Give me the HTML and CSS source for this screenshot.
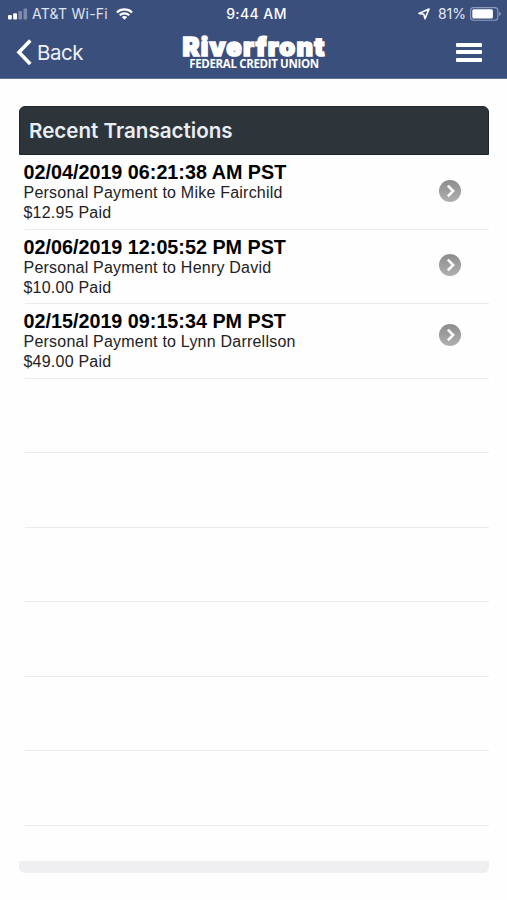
FILE: index.html
```html
<!doctype html>
<html lang="en">
<head>
  <title>Recent Transactions</title>
  <meta charset="utf-8">
  <meta name="viewport" content="width=device-width, initial-scale=1">
  <link rel="stylesheet" href="styles.css">
</head>
<body>

  <!-- top bar -->
  <header class="top">
    <div class="status">
      <div class="status-left">
        <svg class="signal" width="20" height="12" viewBox="0 0 20 12" fill="#fff">
          <rect x="0" y="7" width="3.8" height="4.5" rx="1"/>
          <rect x="5.2" y="5.3" width="3.8" height="6.2" rx="1"/>
          <rect x="10.4" y="3" width="3.6" height="8.5" rx="1" opacity=".35"/>
          <rect x="15.5" y="0.5" width="3.6" height="11" rx="1" opacity=".35"/>
        </svg>
        <span class="carrier">AT&amp;T Wi-Fi</span>
        <svg class="wifi" width="17" height="12" viewBox="0 0 17 12" fill="none" stroke="#fff" stroke-width="2.1">
          <path d="M.9 4.4C5.2.4 11.8.4 16.1 4.4"/>
          <path d="M3.7 7.2C6.4 4.7 10.6 4.7 13.3 7.2"/>
          <path d="M8.5 11.7L5.8 9C7.3 7.6 9.7 7.6 11.2 9Z" fill="#fff" stroke="none"/>
        </svg>
      </div>
      <div class="time">9:44 AM</div>
      <div class="status-right">
        <svg class="location" width="12" height="12" viewBox="0 0 12 12" fill="none" stroke="#fff" stroke-width="1.6" stroke-linejoin="round">
          <path d="M11 1L1 5.4L5.8 6.2L7 10.8Z"/>
        </svg>
        <span class="percent">81%</span>
        <svg class="battery" width="32" height="14" viewBox="0 0 32 14">
          <rect x=".6" y=".6" width="27.2" height="12.6" rx="3" fill="none" stroke="#8f9cbd" stroke-width="1.1"/>
          <rect x="2.3" y="2.2" width="20.6" height="9.4" rx="1.5" fill="#fff"/>
          <path d="M29.2 4.8C31.4 5.6 31.4 8.2 29.2 9Z" fill="#8f9cbd"/>
        </svg>
      </div>
    </div>

    <nav class="nav">
      <a class="back">
        <svg width="17" height="28" viewBox="0 0 17 28" fill="none" stroke="#fff" stroke-width="3.6">
          <path d="M15.3 2.6L4 14.3L15.3 26"/>
        </svg>
        <span>Back</span>
      </a>
      <div class="logo">
        <div class="logo-name">Riverfront</div>
        <div class="logo-sub">FEDERAL CREDIT UNION</div>
      </div>
      <a class="menu">
        <span class="bar"></span>
        <span class="bar"></span>
        <span class="bar"></span>
      </a>
    </nav>
  </header>

  <svg width="0" height="0" class="defs">
    <defs>
      <linearGradient id="grey" x1="0" y1="0" x2="0" y2="1">
        <stop offset="0" stop-color="#8c8c8c"/>
        <stop offset="1" stop-color="#b0b0b0"/>
      </linearGradient>
      <symbol id="arrow" viewBox="0 0 24 24">
        <circle cx="12" cy="12" r="11" fill="url(#grey)"/>
        <path d="M9.8 6.6L15.2 12L9.8 17.4" fill="none" stroke="#fff" stroke-width="2.5"/>
      </symbol>
    </defs>
  </svg>

  <!-- transactions -->
  <main class="panel">
    <h1 class="title">Recent Transactions</h1>
    <ul class="list">
      <li class="row">
        <div class="info">
          <div class="date">02/04/2019 06:21:38 AM PST</div>
          <div class="text">Personal Payment to Mike Fairchild</div>
          <div class="text amount">$12.95 Paid</div>
        </div>
        <svg class="arrow"><use href="#arrow"/></svg>
      </li>
      <li class="row">
        <div class="info">
          <div class="date">02/06/2019 12:05:52 PM PST</div>
          <div class="text">Personal Payment to Henry David</div>
          <div class="text amount">$10.00 Paid</div>
        </div>
        <svg class="arrow arrow-mid"><use href="#arrow"/></svg>
      </li>
      <li class="row">
        <div class="info">
          <div class="date">02/15/2019 09:15:34 PM PST</div>
          <div class="text">Personal Payment to Lynn Darrellson</div>
          <div class="text amount">$49.00 Paid</div>
        </div>
        <svg class="arrow arrow-last"><use href="#arrow"/></svg>
      </li>
      <li class="row"></li>
      <li class="row"></li>
      <li class="row"></li>
      <li class="row"></li>
      <li class="row"></li>
      <li class="row"></li>
    </ul>
    <div class="panel-foot"></div>
  </main>

</body>
</html>
```
FILE: styles.css
```css
* {
  box-sizing: border-box;
}
body {
  margin: 0;
  background-color: #fefefe;
  font-family: 'Liberation Sans', Arial, sans-serif;
}

/* top bar */
.top {
  height: 79px;
  background-color: #3b4f7c;
  border-bottom: 1px solid #5f7299;
  color: #fff;
  font-family: Inter, sans-serif;
}
.status {
  display: grid;
  grid-template-columns: 1fr auto 1fr;
  align-items: center;
  height: 27px;
  padding: 0 5px 0 8px;
  font-size: 14px;
  line-height: 28px;
}
.status-left, .status-right {
  display: flex;
  align-items: center;
}
.status-right {
  justify-content: flex-end;
}
.carrier {
  margin-left: 4px;
  color: #dfe5f1;
  letter-spacing: .25px;
}
.wifi {
  margin-left: 8px;
}
.time {
  margin-right: -3px;
  font-weight: 500;
  letter-spacing: .4px;
}
.percent {
  margin: 0 4px 0 8px;
  color: #e6eaf4;
}

.nav {
  display: grid;
  grid-template-columns: 1fr auto 1fr;
  align-items: center;
  height: 50px;
  padding: 0 25px 0 15px;
}
.back {
  display: flex;
  align-items: center;
  color: #eef1f8;
  font-size: 20.5px;
  letter-spacing: -.5px;
}
.back span {
  margin-left: 5px;
}
.logo {
  margin-right: -11px;
  text-align: center;
}
.logo-name {
  font-size: 25.5px;
  line-height: 22px;
  font-weight: 900;
  letter-spacing: 1.2px;
  -webkit-text-stroke: 1.6px #fff;
}
.logo-sub {
  font-family: 'Open Sans', sans-serif;
  font-size: 11.5px;
  line-height: 11px;
  font-weight: 700;
  letter-spacing: -.35px;
}
.menu {
  display: flex;
  flex-direction: column;
  gap: 3.5px;
  justify-self: end;
}
.bar {
  width: 26px;
  height: 4px;
  border-radius: 1px;
  background-color: #fff;
}

.defs {
  display: block;
}

/* transactions */
.panel {
  width: 470px;
  margin: 27px 0 0 19px;
}
.title {
  height: 49px;
  margin: 0;
  padding-left: 9px;
  border: 1px solid #20272c;
  border-radius: 6px 6px 0 0;
  background-color: #2d343a;
  color: #e9edf4;
  font-family: Inter, sans-serif;
  font-size: 20.6px;
  font-weight: 600;
  line-height: 48px;
}
.list {
  margin: 0;
  padding: 0 0 35px 6px;
  list-style: none;
}
.row {
  display: flex;
  justify-content: space-between;
  height: 74.5px;
  padding-right: 27px;
  border-bottom: 1px solid #ebebeb;
}
.info {
  margin-left: -1.5px;
  padding-top: 6px;
  white-space: nowrap;
}
.date {
  color: #000;
  font-size: 19.75px;
  font-weight: bold;
  line-height: 22px;
}
.text {
  color: #222;
  font-size: 16px;
  line-height: 20px;
  letter-spacing: .22px;
}
.arrow {
  width: 24px;
  height: 24px;
  margin-top: 24px;
}
.arrow-mid {
  margin-top: 23px;
}
.arrow-last {
  margin-top: 19px;
}
.panel-foot {
  height: 12px;
  border-radius: 0 0 6px 6px;
  background-color: #efeff2;
}
```
